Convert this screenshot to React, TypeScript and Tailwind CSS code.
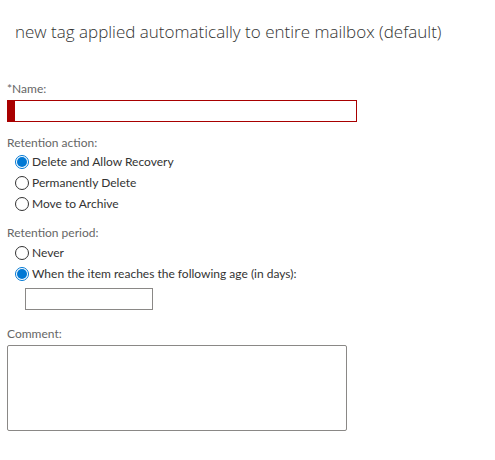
const font = { fontFamily: 'Lato, "Open Sans", "Liberation Sans", sans-serif' };
const titleFont = { fontFamily: '"Open Sans", "Liberation Sans", sans-serif' };

function Radio({ label, checked }: { label: string; checked?: boolean }) {
  return (
    <div className="flex items-center h-[21px] pl-[8px]">
      {checked ? (
        <span className="w-[14px] h-[14px] rounded-full border border-[#0078d4] flex items-center justify-center shrink-0">
          <span className="w-[10px] h-[10px] rounded-full bg-[#0078d4]" />
        </span>
      ) : (
        <span className="w-[14px] h-[14px] rounded-full border border-[#333333] shrink-0" />
      )}
      <span className="ml-[3px] text-[12px] leading-[16px] text-[#333333]">{label}</span>
    </div>
  );
}

export default function App() {
  return (
    <div className="w-[495px] h-[460px] bg-white overflow-hidden" style={font}>
      {/* Header */}
      <h1 className="pl-[15px] pt-[18px] text-[17px] leading-[28px] font-light text-[#333333]" style={titleFont}>
        new tag applied automatically to entire mailbox (default)
      </h1>

      <div className="px-[7px]">
        {/* Name */}
        <div className="mt-[35px] text-[12px] leading-[16px] text-[#666666]">*Name:</div>
        <div className="mt-[3px] w-[350px] h-[22px] border border-[#a80000] flex">
          <span className="w-[7px] h-full bg-[#a80000]" />
        </div>

        {/* Retention action */}
        <div className="mt-[13px] text-[12px] leading-[16px] text-[#666666]">Retention action:</div>
        <div className="flex flex-col">
          <Radio label="Delete and Allow Recovery" checked />
          <Radio label="Permanently Delete" />
          <Radio label="Move to Archive" />
        </div>

        {/* Retention period */}
        <div className="mt-[11px] text-[12px] leading-[16px] text-[#666666]">Retention period:</div>
        <div className="flex flex-col mt-[1px]">
          <Radio label="Never" />
          <Radio label="When the item reaches the following age (in days):" checked />
        </div>
        <div className="mt-[4px] ml-[18px] w-[128px] h-[22px] border border-[#8a8886]" />

        {/* Comment */}
        <div className="mt-[16px] text-[12px] leading-[16px] text-[#666666]">Comment:</div>
        <div className="mt-[3px] w-[340px] h-[86px] border border-[#8a8886] rounded-[2px]" />
      </div>
    </div>
  );
}
